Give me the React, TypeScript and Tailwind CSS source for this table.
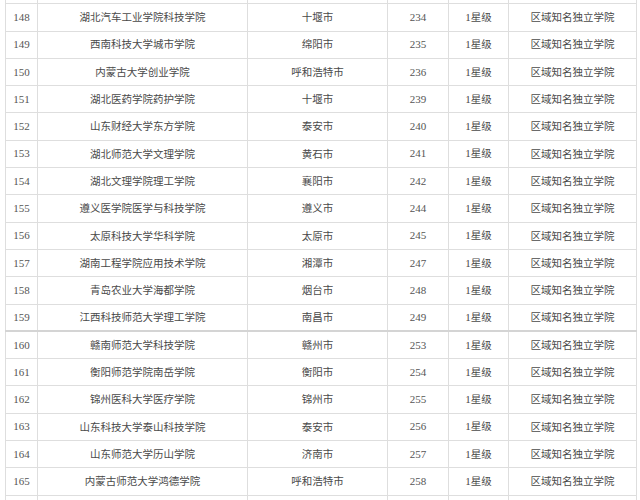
const rows: [number, string, string, number][] = [
  [148, "湖北汽车工业学院科技学院", "十堰市", 234],
  [149, "西南科技大学城市学院", "绵阳市", 235],
  [150, "内蒙古大学创业学院", "呼和浩特市", 236],
  [151, "湖北医药学院药护学院", "十堰市", 239],
  [152, "山东财经大学东方学院", "泰安市", 240],
  [153, "湖北师范大学文理学院", "黄石市", 241],
  [154, "湖北文理学院理工学院", "襄阳市", 242],
  [155, "遵义医学院医学与科技学院", "遵义市", 244],
  [156, "太原科技大学华科学院", "太原市", 245],
  [157, "湖南工程学院应用技术学院", "湘潭市", 247],
  [158, "青岛农业大学海都学院", "烟台市", 248],
  [159, "江西科技师范大学理工学院", "南昌市", 249],
  [160, "赣南师范大学科技学院", "赣州市", 253],
  [161, "衡阳师范学院南岳学院", "衡阳市", 254],
  [162, "锦州医科大学医疗学院", "锦州市", 255],
  [163, "山东科技大学泰山科技学院", "泰安市", 256],
  [164, "山东师范大学历山学院", "济南市", 257],
  [165, "内蒙古师范大学鸿德学院", "呼和浩特市", 258],
];

const cjk = "font-['Noto_Sans_CJK_SC',sans-serif] text-[10.5px] text-[#4a4a4a]";
const num = "font-['Liberation_Serif','Noto_Sans_CJK_SC',serif] text-[11px] text-[#555]";
const td = "border border-[#dedede] text-center align-middle p-0 leading-none";

export default function App() {
  return (
    <div className="w-[640px] h-[500px] overflow-hidden bg-white">
      <table className="table-fixed border-collapse ml-[5px] mt-[-24px] w-[631px]">
        <colgroup>
          <col className="w-[32px]" />
          <col className="w-[210px]" />
          <col className="w-[140px]" />
          <col className="w-[61px]" />
          <col className="w-[60px]" />
          <col className="w-[128px]" />
        </colgroup>
        <tbody>
          <tr className="h-[27.3px]">
            <td className={td}></td>
            <td className={td}></td>
            <td className={td}></td>
            <td className={td}></td>
            <td className={td}></td>
            <td className={td}></td>
          </tr>
          {rows.map(([n, school, city, rank]) => (
            <tr
              key={n}
              className={n === 159 ? "h-[27.3px] border-b-2 border-b-[#d4d4d4]" : "h-[27.3px]"}
            >
              <td className={`${td} ${num}`}>{n}</td>
              <td className={`${td} ${cjk}`}>{school}</td>
              <td className={`${td} ${cjk}`}>{city}</td>
              <td className={`${td} ${num}`}>{rank}</td>
              <td className={`${td} ${cjk}`}>
                <span className="font-['Liberation_Serif',serif] text-[11px]">1</span>星级
              </td>
              <td className={`${td} ${cjk}`}>区域知名独立学院</td>
            </tr>
          ))}
          <tr className="h-[27.3px]">
            <td className={td}></td>
            <td className={td}></td>
            <td className={td}></td>
            <td className={td}></td>
            <td className={td}></td>
            <td className={td}></td>
          </tr>
        </tbody>
      </table>
    </div>
  );
}
